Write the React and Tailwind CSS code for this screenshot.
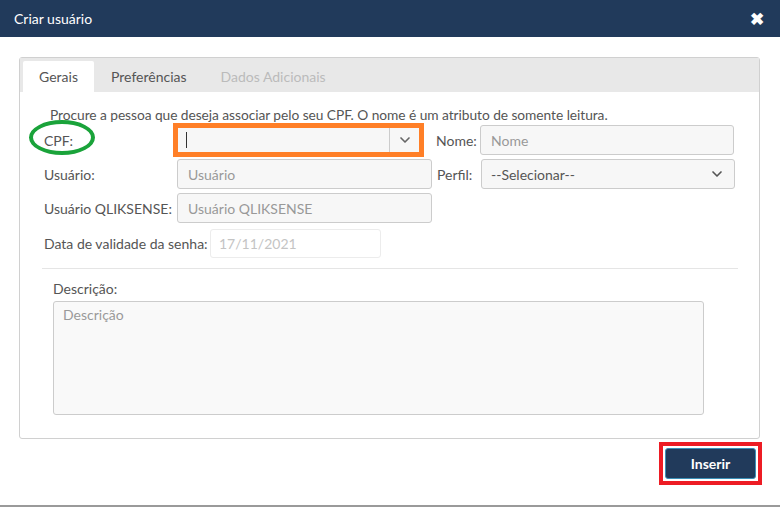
import { ChevronDown } from 'lucide-react';

const Label = ({ children, className = '' }) => (
  <span className={`text-[14px] text-[#555] ${className}`}>{children}</span>
);

const TextInput = ({ placeholder, className = '' }) => (
  <div
    className={`h-[30px] rounded-[3px] border border-[#ccc] bg-[#f7f7f7] px-[10px] flex items-center text-[14px] text-[#999] ${className}`}
  >
    {placeholder}
  </div>
);

export default function App() {
  return (
    <div className="w-[780px] h-[507px] bg-white font-['Lato','Open_Sans',sans-serif] flex flex-col overflow-hidden border-b-2 border-[#9a9a9a]">
      {/* header */}
      <div className="h-[37px] bg-[#213a5b] flex items-center justify-between pl-[14px] pr-[16px] shrink-0">
        <span className="text-white text-[14px]">Criar usuário</span>
        <span className="text-white text-[17px] font-bold leading-none">✖</span>
      </div>

      <div className="px-[19px] pt-[20px] pr-[20px]">
        {/* panel */}
        <div className="border border-[#d0d0d0] rounded-[3px] h-[382px] flex flex-col">
          <div className="h-[34px] bg-[#e8e8e8] flex items-end pl-[3px] shrink-0">
            <div className="h-[31px] w-[71px] bg-white flex items-center justify-center text-[14px] text-[#555] rounded-t-[2px]">
              Gerais
            </div>
            <div className="h-[31px] pl-[17px] flex items-center text-[14px] text-[#555]">Preferências</div>
            <div className="h-[31px] pl-[34px] flex items-center text-[14px] text-[#bbb]">Dados Adicionais</div>
          </div>

          <div className="pl-[22px] pr-[21px] pt-[14px]">
            <p className="pl-[8px] text-[13.75px] tracking-[-0.05px] text-[#555] leading-[18px]">
              Procure a pessoa que deseja associar pelo seu CPF. O nome é um atributo de somente leitura.
            </p>

            {/* row CPF / Nome */}
            <div className="flex items-center h-[34px] mt-[-1px]">
              <div className="relative w-[131px] pl-[2px]">
                <span className="absolute left-[-13px] top-[-8px] w-[66px] h-[35px] rounded-[50%] border-[4px] border-[#1aa33a]" />
                <Label>CPF:</Label>
              </div>
              <div className="border-[5px] border-[#ff7f27] w-[251px] h-[34px] flex">
                <div className="flex-1 bg-[#f7f7f7] flex items-center pl-[8px] border-r border-[#ccc]">
                  <span className="w-px h-[16px] bg-[#333]" />
                </div>
                <div className="w-[29px] bg-[#f7f7f7] flex items-center justify-center">
                  <ChevronDown size={16} strokeWidth={2.5} className="text-[#666]" />
                </div>
              </div>
              <Label className="ml-[12px] w-[45px]">Nome:</Label>
              <TextInput placeholder="Nome" className="w-[254px] ml-[-1px]" />
            </div>

            {/* Usuário / Perfil */}
            <div className="flex items-center mt-[2px]">
              <Label className="w-[135px] pl-[2px]">Usuário:</Label>
              <TextInput placeholder="Usuário" className="w-[255px]" />
              <Label className="ml-[5px] w-[45px]">Perfil:</Label>
              <div className="w-[254px] ml-[-1px] h-[30px] rounded-[3px] border border-[#ccc] bg-[#f7f7f7] px-[9px] flex items-center justify-between text-[14px] text-[#555]">
                --Selecionar--
                <ChevronDown size={16} strokeWidth={2.5} className="text-[#555]" />
              </div>
            </div>

            {/* QLIKSENSE */}
            <div className="flex items-center mt-[4px]">
              <Label className="w-[135px] pl-[2px]">Usuário QLIKSENSE:</Label>
              <TextInput placeholder="Usuário QLIKSENSE" className="w-[255px]" />
            </div>

            {/* Data */}
            <div className="flex items-center mt-[6px]">
              <Label className="w-[168px] pl-[2px]">Data de validade da senha:</Label>
              <div className="w-[171px] h-[29px] rounded-[3px] border border-[#ececec] bg-white px-[8px] flex items-center text-[14px] text-[#c4c4c4]">
                17/11/2021
              </div>
            </div>

            <div className="h-px bg-[#e5e5e5] mt-[10px]" />

            <div className="pl-[11px] pt-[7px]">
              <Label>Descrição:</Label>
              <div className="mt-[1px] w-[651px] h-[114px] rounded-[3px] border border-[#ccc] bg-[#f9f9f9] px-[9px] pt-[2px] text-[14px] text-[#999]">
                Descrição
              </div>
            </div>
          </div>
        </div>

        {/* footer */}
        <div className="flex justify-end pt-[3px] pr-0">
          <div className="border-[4px] border-[#ed1c24] p-[2px] mr-[-2px]">
            <button className="w-[91px] h-[31px] bg-[#213a5b] text-white text-[14px] font-bold rounded-[3px] border border-[#3a8fb7]">
              Inserir
            </button>
          </div>
        </div>
      </div>
    </div>
  );
}
